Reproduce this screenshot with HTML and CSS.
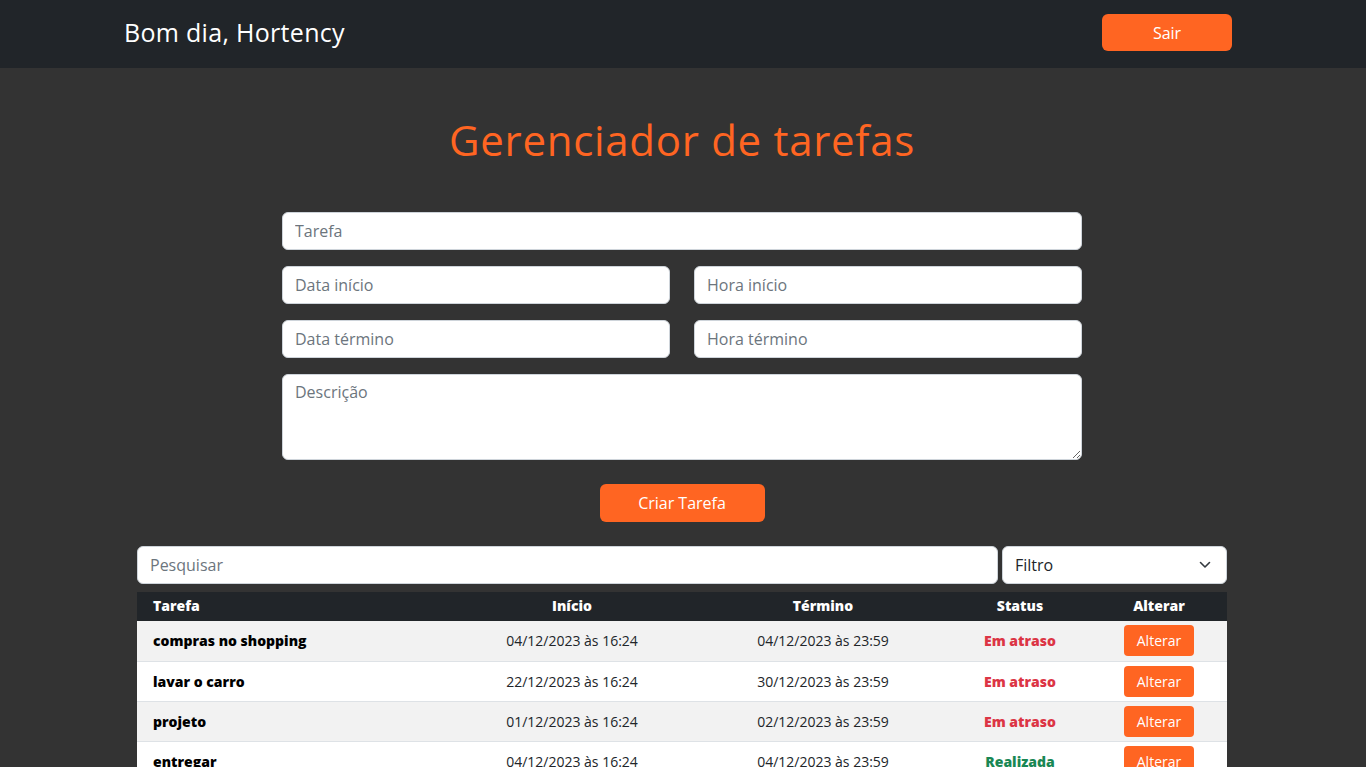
FILE: index.html
```html
<!DOCTYPE html>
<html lang="pt-BR">
<head>
<meta charset="utf-8">
<title>Gerenciador de tarefas</title>
<link rel="stylesheet" href="styles.css">
</head>
<body>
<header class="navbar">
  <div class="nav-inner">
    <span class="greeting">Bom dia, Hortency</span>
    <button class="btn btn-exit">Sair</button>
  </div>
</header>
<main class="main">
  <h1 class="title">Gerenciador de tarefas</h1>
  <form class="task-form">
    <input class="field" type="text" placeholder="Tarefa">
    <div class="form-row">
      <input class="field" type="text" placeholder="Data início">
      <input class="field" type="text" placeholder="Hora início">
    </div>
    <div class="form-row">
      <input class="field" type="text" placeholder="Data término">
      <input class="field" type="text" placeholder="Hora término">
    </div>
    <textarea class="field area" placeholder="Descrição"></textarea>
    <div class="form-actions">
      <button type="button" class="btn btn-create">Criar Tarefa</button>
    </div>
  </form>
  <section class="list">
    <div class="toolbar">
      <input class="field search" type="text" placeholder="Pesquisar">
      <div class="select">
        <span>Filtro</span>
        <svg width="12" height="8" viewBox="0 0 12 8"><path d="M1.5 1.5 L6 6 L10.5 1.5" fill="none" stroke="#343a40" stroke-width="1.6" stroke-linecap="round" stroke-linejoin="round"/></svg>
      </div>
    </div>
    <table class="tasks">
      <colgroup>
        <col class="c1"><col class="c2"><col class="c3"><col class="c4"><col class="c5">
      </colgroup>
      <thead>
        <tr><th class="left">Tarefa</th><th>Início</th><th>Término</th><th>Status</th><th>Alterar</th></tr>
      </thead>
      <tbody>
        <tr class="odd"><td class="left name">compras no shopping</td><td>04/12/2023 às 16:24</td><td>04/12/2023 às 23:59</td><td class="late">Em atraso</td><td><button class="btn btn-edit">Alterar</button></td></tr>
        <tr><td class="left name">lavar o carro</td><td>22/12/2023 às 16:24</td><td>30/12/2023 às 23:59</td><td class="late">Em atraso</td><td><button class="btn btn-edit">Alterar</button></td></tr>
        <tr class="odd"><td class="left name">projeto</td><td>01/12/2023 às 16:24</td><td>02/12/2023 às 23:59</td><td class="late">Em atraso</td><td><button class="btn btn-edit">Alterar</button></td></tr>
        <tr><td class="left name">entregar</td><td>04/12/2023 às 16:24</td><td>04/12/2023 às 23:59</td><td class="done">Realizada</td><td><button class="btn btn-edit">Alterar</button></td></tr>
      </tbody>
    </table>
  </section>
</main>
</body>
</html>
```
FILE: styles.css
```css
* { box-sizing: border-box; }
html, body { margin: 0; padding: 0; }
body {
  font-family: "Open Sans", "DejaVu Sans", sans-serif;
  background: #333333;
  color: #212529;
}
.navbar {
  background: #212529;
  height: 68px;
}
.nav-inner {
  width: 1108px;
  margin-left: calc(50% - 559px);
  height: 68px;
  display: flex;
  align-items: center;
  justify-content: space-between;
}
.greeting {
  color: #fff;
  font-size: 25px;
  letter-spacing: 0.3px;
  margin-top: -4px;
}
.btn {
  font-family: inherit;
  border: none;
  background: #ff6522;
  color: #fff;
  cursor: pointer;
}
.btn-exit {
  width: 130px;
  height: 37px;
  border-radius: 6px;
  font-size: 16px;
  margin-top: -3px;
}
.main {
  display: flex;
  flex-direction: column;
  align-items: center;
  padding-top: 48px;
  padding-right: 2px;
}
.title {
  margin: 0;
  color: #ff6522;
  font-size: 42px;
  letter-spacing: 0.7px;
  font-weight: 400;
  line-height: 48px;
}
.task-form {
  width: 800px;
  margin-top: 48px;
  display: flex;
  flex-direction: column;
  gap: 16px;
}
.form-row {
  display: flex;
  gap: 24px;
}
.field {
  font-family: inherit;
  height: 38px;
  width: 100%;
  border: 1px solid #ced4da;
  border-radius: 6px;
  background: #fff;
  padding: 6px 12px;
  font-size: 16px;
  color: #212529;
}
.field::placeholder { color: #6c757d; }
.area {
  height: 86px;
  resize: vertical;
  display: block;
}
.form-actions {
  display: flex;
  justify-content: center;
  margin-top: 8px;
}
.btn-create {
  width: 165px;
  height: 38px;
  border-radius: 6px;
  font-size: 16px;
}
.list {
  width: 1090px;
  margin-top: 24px;
}
.toolbar {
  display: flex;
  gap: 4px;
  margin-bottom: 8px;
}
.search { flex: 1; }
.select {
  width: 225px;
  height: 38px;
  background: #fff;
  border: 1px solid #ced4da;
  border-radius: 6px;
  display: flex;
  align-items: center;
  justify-content: space-between;
  padding: 0 15px 0 12px;
  font-size: 16px;
  color: #212529;
}
.tasks {
  width: 1090px;
  table-layout: fixed;
  border-collapse: collapse;
  font-size: 14px;
}
.c1 { width: 310px; }
.c2 { width: 250px; }
.c3 { width: 252px; }
.c4 { width: 142px; }
.c5 { width: 136px; }
.tasks th {
  background: #212529;
  color: #fff;
  font-weight: 800;
  height: 29px;
  padding: 0 16px 2px;
  text-align: center;
}
.tasks td {
  height: 40px;
  padding: 0 16px;
  text-align: center;
  border-bottom: 1px solid #dee2e6;
  background: #fff;
  vertical-align: middle;
}
.tasks tr.odd td { background: #f2f2f2; }
.tasks .left { text-align: left; }
.name { font-weight: 800; color: #000; }
.late { color: #dc3545; font-weight: 800; }
.done { color: #198754; font-weight: 800; }
.btn-edit {
  width: 70px;
  height: 31px;
  border-radius: 4px;
  font-size: 14px;
}
```
